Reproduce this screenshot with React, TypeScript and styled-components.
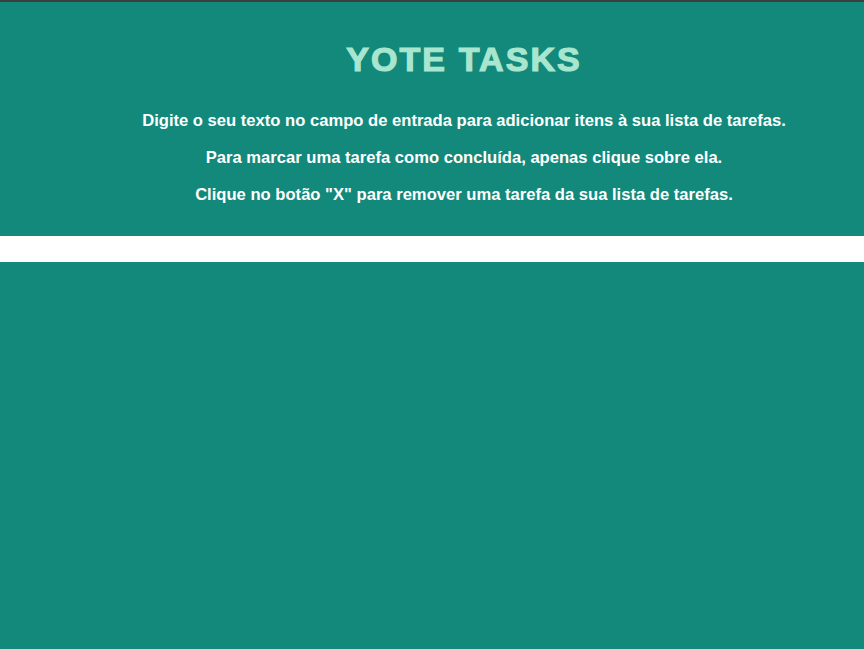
import React from "react";
import styled, { createGlobalStyle } from "styled-components";

const Global = createGlobalStyle`
  html, body { margin: 0; padding: 0; }
  body {
    background: #12897b;
    font-family: "Liberation Sans", Arial, sans-serif;
    min-height: 649px;
    border-top: 2px solid #3d4040;
    box-sizing: border-box;
  }
`;

const Header = styled.header`
  background: #12897b;
  padding: 38px 0 32px 64px;
  display: flex;
  flex-direction: column;
  align-items: center;
`;

const Title = styled.h1`
  margin: 0 0 33px;
  font-family: "Arial Black", "Liberation Sans", Arial, sans-serif;
  font-size: 34px;
  line-height: 38px;
  font-weight: 700;
  color: #a8e6cf;
  letter-spacing: 2.1px;
  -webkit-text-stroke: 1.2px #a8e6cf;
`;

const Instructions = styled.div`
  display: flex;
  flex-direction: column;
  align-items: center;
  gap: 18px;
`;

const Line = styled.p`
  margin: 0;
  color: #ffffff;
  font-size: 16.6px;
  line-height: 19px;
  font-weight: 700;
  text-align: center;
`;

const Band = styled.div`
  height: 26px;
  background: #ffffff;
`;

export default function App() {
  return (
    <>
      <Global />
      <Header>
        <Title>YOTE TASKS</Title>
        <Instructions>
          <Line>Digite o seu texto no campo de entrada para adicionar itens à sua lista de tarefas.</Line>
          <Line>Para marcar uma tarefa como concluída, apenas clique sobre ela.</Line>
          <Line>Clique no botão "X" para remover uma tarefa da sua lista de tarefas.</Line>
        </Instructions>
      </Header>
      <Band />
    </>
  );
}
